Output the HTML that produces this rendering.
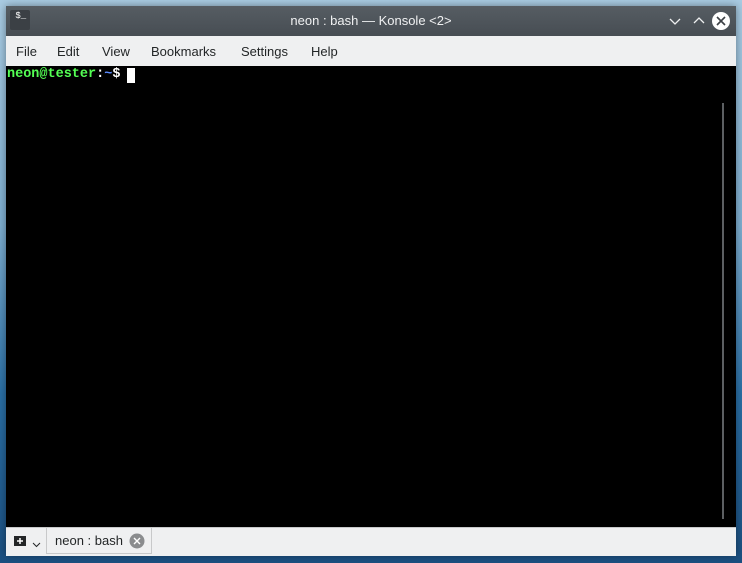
<!DOCTYPE html>
<html><head><style>
body{margin:0;width:742px;height:563px;overflow:hidden;background:linear-gradient(180deg,#a9cbe2 0%,#7eaed0 40%,#2a6fa5 70%,#1b4f80 100%);font-family:"Liberation Sans","DejaVu Sans",sans-serif;position:relative}
.win{position:absolute;left:6px;top:6px;width:730px;height:549px;background:#eff0f1;box-shadow:0 0 8px rgba(0,0,0,.4)}
.title{height:30px;background:linear-gradient(#565d63,#474d53);color:#eff0f1;font-size:13px;text-align:center;line-height:30px;position:relative}
.menu{height:30px;background:#eff0f1;font-size:13px;color:#232627;position:relative}
.menu span{position:absolute;top:8px}
.term{position:absolute;left:0;top:60px;width:730px;height:461px;background:#000}
.tabs{position:absolute;left:0;top:521px;width:730px;height:28px;background:#eff0f1;border-top:1px solid #c8c9ca}
</style></head><body>
<div class="win">
<div class="title">neon : bash — Konsole &lt;2&gt;
<div style="position:absolute;left:4px;top:4px;width:20px;height:20px;background:#3b4045;border-radius:2px;color:#fff;font-size:9px;line-height:12px;text-align:left;font-family:'Liberation Mono',monospace">&nbsp;$_</div>
<svg style="position:absolute;left:662px;top:8px" width="14" height="14"><path d="M2 5 L7 10 L12 5" stroke="#eff0f1" stroke-width="1.3" fill="none"/></svg>
<svg style="position:absolute;left:686px;top:8px" width="14" height="14"><path d="M2 9 L7 4 L12 9" stroke="#eff0f1" stroke-width="1.3" fill="none"/></svg>
<svg style="position:absolute;left:705px;top:5px" width="20" height="20"><circle cx="10" cy="10" r="9" fill="#fff"/><path d="M6 6 L14 14 M14 6 L6 14" stroke="#3b4045" stroke-width="1.6"/></svg>
</div>
<div class="menu"><span style="left:10px">File</span><span style="left:51px">Edit</span><span style="left:96px">View</span><span style="left:145px">Bookmarks</span><span style="left:235px">Settings</span><span style="left:305px">Help</span></div>
<div class="term">
<div style="position:absolute;left:1px;top:1px;font-family:'Liberation Mono','DejaVu Sans Mono',monospace;font-size:13.5px;font-weight:bold;color:#54ff54">neon@tester<span style="color:#fff">:</span><span style="color:#5c8cff">~</span><span style="color:#fff">$</span></div>
<div style="position:absolute;left:121px;top:2px;width:8px;height:15px;background:#fff"></div>
<div style="position:absolute;left:716px;top:37px;width:2px;height:416px;background:#5c5f62"></div>
</div>
<div class="tabs">
<svg style="position:absolute;left:6px;top:6px" width="30" height="16"><path d="M2 2 h12 v10 h-12z" fill="#232627"/><path d="M5 7 h6 M8 4 v6" stroke="#fff" stroke-width="1.5"/><path d="M21 9 l3.5 3.5 l3.5 -3.5" stroke="#232627" fill="none"/></svg>
<div style="position:absolute;left:40px;top:0;width:106px;height:26px;border:1px solid #c8c9ca;border-top:none;background:#eff0f1;font-size:13px;color:#232627;line-height:26px;padding-left:8px;box-sizing:border-box">neon : bash
<svg style="position:absolute;left:82px;top:5px" width="16" height="16"><circle cx="8" cy="8" r="7.5" fill="#8a8c8e"/><path d="M5 5 L11 11 M11 5 L5 11" stroke="#fff" stroke-width="1.4"/></svg></div>
</div>
</div>
</body></html>
